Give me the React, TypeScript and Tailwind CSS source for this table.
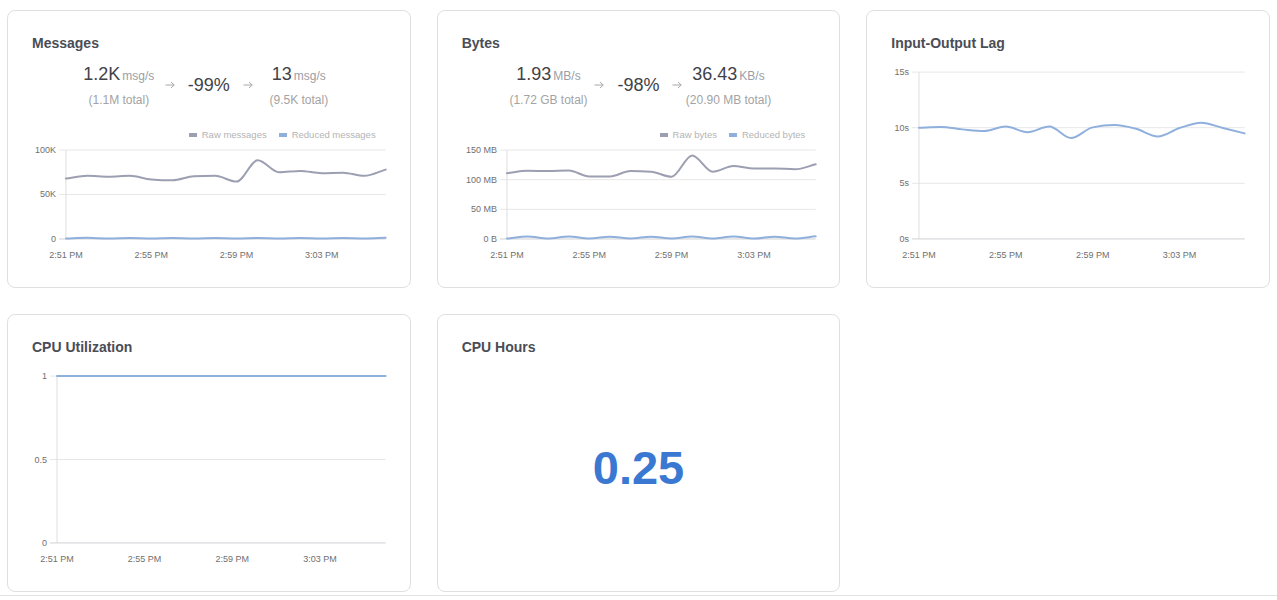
import React from "react";

type Series = { values: number[]; color: string };
type Tick = { value: number; label: string };

const X_LABELS = ["2:51 PM", "2:55 PM", "2:59 PM", "3:03 PM"];

// monotone cubic (same idea as d3's curveMonotoneX)
function smoothPath(pts: [number, number][]) {
  const n = pts.length;
  const h = pts[1][0] - pts[0][0];
  const s: number[] = [];
  for (let i = 0; i < n - 1; i++) s.push((pts[i + 1][1] - pts[i][1]) / h);
  const t: number[] = pts.map((_, i) => {
    if (i === 0) return s[0];
    if (i === n - 1) return s[n - 2];
    const s0 = s[i - 1];
    const s1 = s[i];
    const p = (s0 + s1) / 2;
    return (Math.sign(s0) + Math.sign(s1)) * Math.min(Math.abs(s0), Math.abs(s1), 0.5 * Math.abs(p));
  });
  let d = `M${pts[0][0]},${pts[0][1]}`;
  for (let i = 0; i < n - 1; i++) {
    const [x0, y0] = pts[i];
    const [x1, y1] = pts[i + 1];
    d += ` C${x0 + h / 3},${y0 + (t[i] * h) / 3} ${x1 - h / 3},${y1 - (t[i + 1] * h) / 3} ${x1},${y1}`;
  }
  return d;
}

function Chart({
  height,
  plotLeft,
  max,
  ticks,
  series,
}: {
  height: number;
  plotLeft: number;
  max: number;
  ticks: Tick[];
  series: Series[];
}) {
  const width = 354;
  const plotTop = 8;
  const plotBottom = height - 25;
  const n = series[0].values.length;
  const step = (width - plotLeft) / (n - 1);
  const x = (i: number) => plotLeft + i * step;
  const y = (v: number) => plotBottom - (v / max) * (plotBottom - plotTop);

  return (
    <svg width="100%" height={height} viewBox={`0 0 ${width} ${height}`} className="block overflow-visible">
      {ticks.map((t) => (
        <g key={t.label}>
          <line
            x1={plotLeft - 7}
            x2={width}
            y1={y(t.value)}
            y2={y(t.value)}
            stroke={t.value === 0 ? "#cfd0d3" : "#e7e7e7"}
            strokeWidth={1}
          />
          <text x={plotLeft - 10} y={y(t.value) + 3} textAnchor="end" fontSize={9} fill="#6f6f6f">
            {t.label}
          </text>
        </g>
      ))}
      <line x1={plotLeft} x2={plotLeft} y1={plotTop} y2={plotBottom} stroke="#dedede" strokeWidth={1} />
      {X_LABELS.map((l, i) => (
        <text key={l} x={x(i * 4)} y={plotBottom + 19} textAnchor="middle" fontSize={9} fill="#6f6f6f">
          {l}
        </text>
      ))}
      {series.map((s, k) => (
        <path
          key={k}
          d={smoothPath(s.values.map((v, i) => [x(i), y(v)] as [number, number]))}
          fill="none"
          stroke={s.color}
          strokeWidth={2}
          strokeLinejoin="round"
          strokeLinecap="round"
        />
      ))}
    </svg>
  );
}

const RAW = "#9c9fb1";
const REDUCED = "#8fb0dd";

function Arrow() {
  return (
    <svg width="10" height="8" viewBox="0 0 10 8" className="block">
      <path d="M0.5 4H9.2M6 1L9.2 4L6 7" fill="none" stroke="#a8a8a8" strokeWidth="1" />
    </svg>
  );
}

function Stats({
  from,
  fromUnit,
  fromTotal,
  pct,
  to,
  toUnit,
  toTotal,
}: {
  from: string;
  fromUnit: string;
  fromTotal: string;
  pct: string;
  to: string;
  toUnit: string;
  toTotal: string;
}) {
  const group = (v: string, u: string, total: string) => (
    <div className="flex w-[82px] flex-col items-center whitespace-nowrap">
      <div className="flex h-6 items-baseline">
        <span className="text-[18px] leading-6 text-[#3f4249]">{v}</span>
        <span className="ml-[2px] text-[12px] text-[#9b9ea6]">{u}</span>
      </div>
      <div className="mt-[6px] text-[12px] leading-4 text-[#a3a3a3]">{total}</div>
    </div>
  );
  return (
    <div className="mt-[9px] flex items-center justify-center">
      {group(from, fromUnit, fromTotal)}
      <div className="flex w-[20px] justify-center">
        <Arrow />
      </div>
      <div className="w-[58px] text-center text-[18px] leading-6 text-[#3f4249]">{pct}</div>
      <div className="flex w-[20px] justify-center">
        <Arrow />
      </div>
      {group(to, toUnit, toTotal)}
    </div>
  );
}

function Legend({ items }: { items: { label: string; color: string }[] }) {
  return (
    <div className="mt-[21px] flex h-3 items-center justify-end gap-3 pr-[10px]">
      {items.map((it) => (
        <div key={it.label} className="flex items-center gap-[5px]">
          <span className="block h-[4px] w-[8px]" style={{ backgroundColor: it.color }} />
          <span className="text-[9.5px] leading-3 text-[#b4b4b4]">{it.label}</span>
        </div>
      ))}
    </div>
  );
}

function Card({ title, children }: { title: string; children?: React.ReactNode }) {
  return (
    <div className="flex h-[278px] flex-col rounded-lg border border-[#dfdfdf] bg-white px-6 pt-[22px] pb-6">
      <h2 className="text-[14px] leading-5 font-bold text-[#4a4d55]">{title}</h2>
      {children}
    </div>
  );
}

const rawMessages = [68, 71, 70, 71, 67, 66, 70.5, 71, 64.5, 88.5, 75, 76.5, 74, 74.5, 71, 78];
const reducedMessages = [0.6, 1.3, 0.5, 1.2, 0.4, 1.1, 0.5, 1.2, 0.4, 1.2, 0.5, 1.2, 0.4, 1.2, 0.5, 1.3];
const rawBytes = [111, 115, 114.5, 115.5, 105.5, 105.5, 114.5, 113.5, 105, 141, 113.5, 123, 119, 119, 117.5, 126];
const reducedBytes = [0.8, 4, 0.8, 4, 0.8, 3.8, 0.8, 3.8, 0.8, 4, 0.8, 4, 0.8, 3.8, 0.8, 4.5];
const lag = [10, 10.06, 9.85, 9.7, 10.1, 9.6, 10.1, 9.07, 10.03, 10.24, 9.9, 9.22, 9.97, 10.45, 9.97, 9.49];
const cpu = Array.from({ length: 16 }, () => 1);

export default function App() {
  return (
    <div className="min-h-screen bg-white" style={{ fontFamily: '"Liberation Sans", Arial, Helvetica, sans-serif' }}>
      <div className="grid grid-cols-3 gap-[26px] border-b border-[#e3e3e3] px-[7px] pt-[10px] pb-[3px]">
        <Card title="Messages">
          <Stats
            from="1.2K"
            fromUnit="msg/s"
            fromTotal="(1.1M total)"
            pct="-99%"
            to="13"
            toUnit="msg/s"
            toTotal="(9.5K total)"
          />
          <Legend
            items={[
              { label: "Raw messages", color: RAW },
              { label: "Reduced messages", color: REDUCED },
            ]}
          />
          <div className="mt-[1px]">
            <Chart
              height={122}
              plotLeft={34}
              max={100}
              ticks={[
                { value: 100, label: "100K" },
                { value: 50, label: "50K" },
                { value: 0, label: "0" },
              ]}
              series={[
                { values: rawMessages, color: RAW },
                { values: reducedMessages, color: REDUCED },
              ]}
            />
          </div>
        </Card>

        <Card title="Bytes">
          <Stats
            from="1.93"
            fromUnit="MB/s"
            fromTotal="(1.72 GB total)"
            pct="-98%"
            to="36.43"
            toUnit="KB/s"
            toTotal="(20.90 MB total)"
          />
          <Legend
            items={[
              { label: "Raw bytes", color: RAW },
              { label: "Reduced bytes", color: REDUCED },
            ]}
          />
          <div className="mt-[1px]">
            <Chart
              height={122}
              plotLeft={45}
              max={150}
              ticks={[
                { value: 150, label: "150 MB" },
                { value: 100, label: "100 MB" },
                { value: 50, label: "50 MB" },
                { value: 0, label: "0 B" },
              ]}
              series={[
                { values: rawBytes, color: RAW },
                { values: reducedBytes, color: REDUCED },
              ]}
            />
          </div>
        </Card>

        <Card title="Input-Output Lag">
          <div className="mt-[11px]">
            <Chart
              height={200}
              plotLeft={28}
              max={15}
              ticks={[
                { value: 15, label: "15s" },
                { value: 10, label: "10s" },
                { value: 5, label: "5s" },
                { value: 0, label: "0s" },
              ]}
              series={[{ values: lag, color: REDUCED }]}
            />
          </div>
        </Card>

        <Card title="CPU Utilization">
          <div className="mt-[11px]">
            <Chart
              height={200}
              plotLeft={25}
              max={1}
              ticks={[
                { value: 1, label: "1" },
                { value: 0.5, label: "0.5" },
                { value: 0, label: "0" },
              ]}
              series={[{ values: cpu, color: REDUCED }]}
            />
          </div>
        </Card>

        <Card title="CPU Hours">
          <div className="flex flex-1 items-center justify-center pt-[10px]">
            <span className="text-[47px] leading-none font-bold text-[#3a78d2]">0.25</span>
          </div>
        </Card>
      </div>
    </div>
  );
}
